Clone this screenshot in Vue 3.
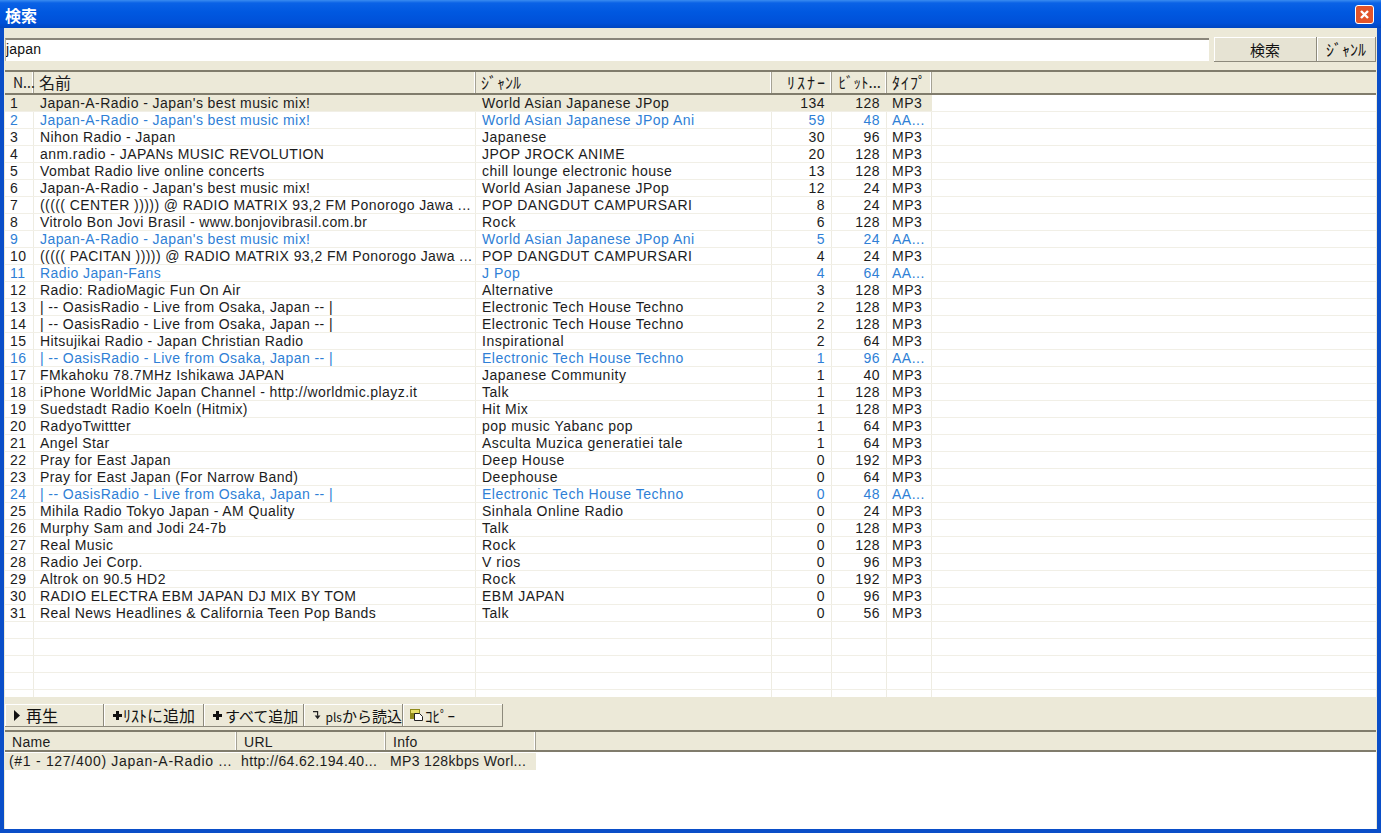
<template>
  <div class="window">
    <div class="titlebar">
      <span class="title">検索</span>
      <div class="close">
        <svg width="11" height="11" viewBox="0 0 11 11"><path d="M2 2 L9 9 M9 2 L2 9" stroke="#fff" stroke-width="2.4" /></svg>
      </div>
    </div>
    <div class="body">
      <div class="search-bar">
        <input class="search-input" value="japan" />
        <button class="btn btn-search">検索</button>
        <button class="btn btn-genre">ｼﾞｬﾝﾙ</button>
      </div>

      <div class="list main-list">
        <div class="head row-grid">
          <div v-for="h in headers" :key="h.label" class="head-cell" :class="h.cls">{{ h.label }}</div>
          <div class="head-cell"></div>
        </div>
        <div class="rows">
          <div
            v-for="(s, i) in rows"
            :key="i"
            class="row row-grid"
            :class="{ aac: s[5] === 'AA...', selected: i === 0 }"
          >
            <div class="cell c-no">{{ s[0] }}</div>
            <div class="cell c-name">{{ s[1] }}</div>
            <div class="cell c-genre">{{ s[2] }}</div>
            <div class="cell num">{{ s[3] }}</div>
            <div class="cell num">{{ s[4] }}</div>
            <div class="cell c-type">{{ s[5] }}</div>
            <div class="cell blank"></div>
          </div>
        </div>
      </div>

      <div class="toolbar">
        <button class="tool t1">
          <svg width="6" height="11" viewBox="0 0 6 11"><path d="M0 0 L6 5.5 L0 11 Z" fill="#111" /></svg>
          <span class="big">再生</span>
        </button>
        <button class="tool t2">
          <svg width="9" height="9" viewBox="0 0 9 9"><path d="M3 0h3v3h3v3H6v3H3V6H0V3h3z" fill="#111" /></svg>
          <span>ﾘｽﾄに追加</span>
        </button>
        <button class="tool t3">
          <svg width="9" height="9" viewBox="0 0 9 9"><path d="M3 0h3v3h3v3H6v3H3V6H0V3h3z" fill="#111" /></svg>
          <span class="mid">すべて追加</span>
        </button>
        <button class="tool t4">
          <svg width="9" height="10" viewBox="0 0 9 10"><path d="M0 1 H5.5 V6" fill="none" stroke="#222" stroke-width="1.4" /><path d="M2 5.5 H9 L5.5 10 Z" fill="#222" /></svg>
          <span class="mid"><small>pls</small>から読込</span>
        </button>
        <button class="tool t5">
          <svg width="13" height="12" viewBox="0 0 13 12"><rect x="0" y="0" width="10" height="10" fill="#8f8a1c" /><rect x="1" y="1" width="8" height="3" fill="#e6df6a" /><path d="M4.5 4.5 H9.5 L12.5 7.5 V11.5 H4.5 Z" fill="#fff" stroke="#222" /></svg>
          <span class="small-jp">ｺﾋﾟｰ</span>
        </button>
      </div>

      <div class="list sub-list">
        <div class="sub-head">
          <div class="head-cell sub-a">Name</div>
          <div class="head-cell sub-b">URL</div>
          <div class="head-cell sub-c">Info</div>
          <div class="head-cell sub-d"></div>
        </div>
        <div class="sub-rows">
          <div class="sub-row">
            <div class="cell sub-a sa">(#1 - 127/400) Japan-A-Radio ...</div>
            <div class="cell sub-b">http://64.62.194.40...</div>
            <div class="cell sub-c">MP3 128kbps Worl...</div>
          </div>
        </div>
      </div>
    </div>
  </div>
</template>

<script setup>
const headers = [
  { label: 'N...', cls: 'h-no' },
  { label: '名前', cls: '' },
  { label: 'ｼﾞｬﾝﾙ', cls: '' },
  { label: 'ﾘｽﾅｰ', cls: 'h-right h-wide' },
  { label: 'ﾋﾞｯﾄ...', cls: 'h-right h-bit' },
  { label: 'ﾀｲﾌﾟ', cls: 'h-type' },
]

const jpop = 'World Asian Japanese JPop'
const ani = 'World Asian Japanese JPop Ani'
const best = "Japan-A-Radio - Japan's best music mix!"
const oasis = '| -- OasisRadio - Live from Osaka, Japan -- |'
const tech = 'Electronic Tech House Techno'
const camp = 'POP DANGDUT CAMPURSARI'

const rows = [
  [1, best, jpop, 134, 128, 'MP3'],
  [2, best, ani, 59, 48, 'AA...'],
  [3, 'Nihon Radio - Japan', 'Japanese', 30, 96, 'MP3'],
  [4, 'anm.radio - JAPANs MUSIC REVOLUTION', 'JPOP JROCK ANIME', 20, 128, 'MP3'],
  [5, 'Vombat Radio live online concerts', 'chill lounge electronic house', 13, 128, 'MP3'],
  [6, best, jpop, 12, 24, 'MP3'],
  [7, '((((( CENTER ))))) @ RADIO MATRIX 93,2 FM Ponorogo Jawa ...', camp, 8, 24, 'MP3'],
  [8, 'Vitrolo Bon Jovi Brasil - www.bonjovibrasil.com.br', 'Rock', 6, 128, 'MP3'],
  [9, best, ani, 5, 24, 'AA...'],
  [10, '((((( PACITAN ))))) @ RADIO MATRIX 93,2 FM Ponorogo Jawa ...', camp, 4, 24, 'MP3'],
  [11, 'Radio Japan-Fans', 'J Pop', 4, 64, 'AA...'],
  [12, 'Radio: RadioMagic Fun On Air', 'Alternative', 3, 128, 'MP3'],
  [13, oasis, tech, 2, 128, 'MP3'],
  [14, oasis, tech, 2, 128, 'MP3'],
  [15, 'Hitsujikai Radio - Japan Christian Radio', 'Inspirational', 2, 64, 'MP3'],
  [16, oasis, tech, 1, 96, 'AA...'],
  [17, 'FMkahoku 78.7MHz Ishikawa JAPAN', 'Japanese Community', 1, 40, 'MP3'],
  [18, 'iPhone WorldMic Japan Channel - http://worldmic.playz.it', 'Talk', 1, 128, 'MP3'],
  [19, 'Suedstadt Radio Koeln (Hitmix)', 'Hit Mix', 1, 128, 'MP3'],
  [20, 'RadyoTwittter', 'pop music Yabanc pop', 1, 64, 'MP3'],
  [21, 'Angel Star', 'Asculta Muzica generatiei tale', 1, 64, 'MP3'],
  [22, 'Pray for East Japan', 'Deep House', 0, 192, 'MP3'],
  [23, 'Pray for East Japan (For Narrow Band)', 'Deephouse', 0, 64, 'MP3'],
  [24, oasis, tech, 0, 48, 'AA...'],
  [25, 'Mihila Radio Tokyo Japan - AM Quality', 'Sinhala Online Radio', 0, 24, 'MP3'],
  [26, 'Murphy Sam and Jodi 24-7b', 'Talk', 0, 128, 'MP3'],
  [27, 'Real Music', 'Rock', 0, 128, 'MP3'],
  [28, 'Radio Jei Corp.', 'V rios', 0, 96, 'MP3'],
  [29, 'Altrok on 90.5 HD2', 'Rock', 0, 192, 'MP3'],
  [30, 'RADIO ELECTRA EBM JAPAN DJ MIX BY TOM', 'EBM JAPAN', 0, 96, 'MP3'],
  [31, 'Real News Headlines & California Teen Pop Bands', 'Talk', 0, 56, 'MP3'],
  ['', '', '', '', '', ''],
  ['', '', '', '', '', ''],
  ['', '', '', '', '', ''],
  ['', '', '', '', '', ''],
  ['', '', '', '', '', ''],
]
</script>

<style>
html, body { margin: 0; background: #0a4ec8; }
</style>

<style scoped>
.window {
  width: 1381px;
  height: 833px;
  display: flex;
  flex-direction: column;
  box-sizing: border-box;
  font-family: "Liberation Sans", "Noto Sans CJK JP", sans-serif;
  font-size: 14px;
  color: #1c1c1c;
  background: #0a4ec8;
  overflow: hidden;
}

.titlebar {
  height: 28px;
  flex: none;
  box-sizing: border-box;
  display: flex;
  align-items: center;
  justify-content: space-between;
  padding: 1px 7px 0 5px;
  background: linear-gradient(to bottom, #3a8cf0 0, #0a62e6 3px, #0058e0 12px, #0050d8 23px, #0046c0 28px);
}

.title {
  color: #fff;
  font-family: "Noto Sans CJK JP", sans-serif;
  font-size: 16px;
  font-weight: 700;
}

.close {
  width: 19px;
  height: 19px;
  box-sizing: border-box;
  border: 1px solid #fff;
  border-radius: 3px;
  background: #e2542a;
  display: flex;
  align-items: center;
  justify-content: center;
}

.body {
  flex: 1;
  margin: 0 4px 4px 4px;
  background: #ece9d8;
  display: flex;
  flex-direction: column;
  min-height: 0;
}

.search-bar {
  display: flex;
  height: 26px;
  margin: 9px 1px 0 1px;
  flex: none;
}

.search-input {
  width: 1204px;
  height: 23px;
  box-sizing: border-box;
  margin-top: 1px;
  padding: 0 0 3px 0;
  border: none;
  border-top: 2px solid #8a867a;
  border-left: 1px solid #bdb9a8;
  outline: none;
  background: #fff;
  font: inherit;
  letter-spacing: 0.2px;
  color: #111;
}

.btn {
  height: 25px;
  padding: 0;
  border: none;
  border-right: 1px solid #8d8a7c;
  border-bottom: 1px solid #8d8a7c;
  box-shadow: inset 1px 1px 0 #fff;
  background: #e6e3d3;
  font-family: "Noto Sans CJK JP", sans-serif;
  color: #111;
}

.btn-search {
  width: 103px;
  margin-left: 5px;
  font-size: 15px;
}

.btn-genre {
  width: 59px;
  font-size: 16px;
}

.list {
  margin: 0 1px;
  background: #fff;
}

.main-list {
  margin-top: 7px;
  flex: none;
  border-top: 2px solid #807c6c;
}

.head {
  height: 21px;
  background: #ece9d8;
  border-bottom: 2px solid #807c6c;
  box-sizing: content-box;
}

.row-grid {
  display: grid;
  grid-template-columns: 29px 442px 296px 60px 55px 45px 1fr;
}

.head-cell {
  box-sizing: border-box;
  height: 100%;
  padding: 0 5px;
  line-height: 20px;
  border-right: 1px solid #a5a294;
  box-shadow: inset -1px 0 0 #fff;
  white-space: nowrap;
  font-family: "Noto Sans CJK JP", sans-serif;
  font-size: 16px;
}

.head-cell:last-child {
  border-right: none;
  box-shadow: none;
}

.h-right { text-align: right; padding: 0 4px 0 0; }
.h-wide { letter-spacing: 2px; }
.h-bit { font-size: 15px; padding-right: 5px; }
.h-no { padding: 0 0 0 8px; font-size: 14px; }
.h-type { letter-spacing: 1px; }

.rows {
  height: 602px;
  overflow: hidden;
}

.row {
  height: 17px;
  box-sizing: border-box;
  border-bottom: 1px solid #f1efe6;
}

.row.aac { color: #2f7fd6; }

.cell {
  line-height: 16px;
  padding: 0 5px 0 5px;
  white-space: nowrap;
  overflow: hidden;
  border-right: 1px solid #eeece2;
  letter-spacing: 0.5px;
}

.row .cell.blank { border-right: none; }
.row.selected .cell:not(.blank) { background: #ece9d8; border-right-color: #ece9d8; }

.c-name { padding-left: 6px; letter-spacing: 0.42px; }
.c-genre { padding-left: 6px; }
.num { text-align: right; padding-right: 6px; }

.toolbar {
  display: flex;
  height: 23px;
  flex: none;
  margin: 7px 1px 0 1px;
}

.tool {
  box-sizing: border-box;
  height: 23px;
  padding: 0 0 0 9px;
  display: flex;
  align-items: center;
  gap: 1px;
  border: none;
  border-right: 1px solid #8d8a7c;
  border-bottom: 1px solid #8d8a7c;
  box-shadow: inset 1px 1px 0 #fff;
  background: #ece9d8;
  color: #111;
  font-family: "Noto Sans CJK JP", sans-serif;
  font-size: 16px;
  white-space: nowrap;
}

.tool small { font-size: 12px; }
.big { font-size: 16px; }
.mid { font-size: 15px; }
.small-jp { font-size: 15px; }
.t1 { width: 99px; gap: 6px; }
.t2 { width: 100px; }
.t3 { width: 100px; gap: 3px; }
.t4 { width: 99px; gap: 5px; }
.t5 { width: 100px; padding-left: 7px; gap: 2px; }

.sub-list {
  margin-top: 3px;
  flex: 1;
  display: flex;
  flex-direction: column;
  border-top: 2px solid #807c6c;
  min-height: 0;
}

.sub-head {
  display: flex;
  height: 18px;
  flex: none;
  background: #ece9d8;
  border-bottom: 2px solid #807c6c;
}

.sub-head .head-cell {
  font-family: "Liberation Sans", sans-serif;
  font-size: 14px;
  line-height: 20px;
  padding-left: 7px;
  letter-spacing: 0.3px;
}

.sub-a { width: 232px; }
.sub-b { width: 149px; }
.sub-c { width: 150px; }
.sub-d { flex: 1; }

.sub-rows { padding: 1px 0 0 0; }

.sub-row {
  display: flex;
  height: 17px;
  width: 531px;
  background: #ece9d8;
}

.sub-row .cell {
  box-sizing: border-box;
  border-right: none;
  padding: 0 0 0 4px;
  line-height: 17px;
  letter-spacing: 0.35px;
}

.sub-row .sa { letter-spacing: 0.7px; }
</style>
